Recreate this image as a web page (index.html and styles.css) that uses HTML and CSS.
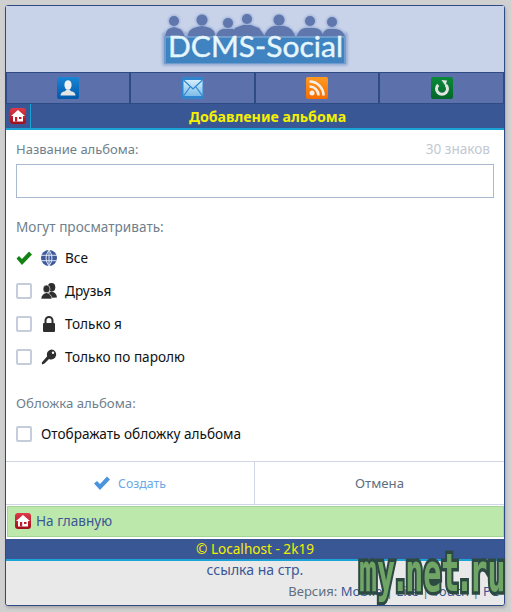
FILE: index.html
```html
<!DOCTYPE html>
<html lang="en">
<head>
  <meta charset="UTF-8">
  <title>DCMS-Social</title>
  <link rel="stylesheet" href="styles.css">
</head>
<body>
  <div class="page">
    <div class="logo-bar">
      <svg class="logo" width="190" height="54" viewBox="0 0 190 54">
        <defs>
          <filter id="soft" x="-10%" y="-10%" width="120%" height="120%"><feGaussianBlur stdDeviation="1.200"/></filter>
          <g id="people">
            <circle cx="14" cy="8" r="5"/><path d="M5 26 q0-10 6-11 l3-1 3 1 q7 1 8 11z"/>
            <circle cx="42" cy="7" r="5.500"/><path d="M27 26 q1-11 10-12 l5-1 5 1 q8 1 9 12z"/>
            <circle cx="68" cy="10" r="5"/><path d="M55 26 q2-9 8-10 h10 q7 1 9 10z"/>
            <circle cx="87" cy="6" r="5"/><path d="M72 26 l3-11 8-3 h8 l8 3 8 11z"/>
            <circle cx="119" cy="7" r="5.500"/><path d="M103 26 q4-12 11-13 h10 q9 1 12 13z"/>
            <circle cx="150" cy="8" r="5"/><path d="M136 26 q2-10 9-11 h10 q8 1 9 11z"/>
            <circle cx="172" cy="9" r="5"/><path d="M161 26 q2-9 7-10 h8 q8 1 10 10z"/>
          </g>
        </defs>
        <g class="logo-glow" filter="url(#soft)">
          <use href="#people"/>
          <rect x="3" y="20" width="184" height="32" rx="2"/>
        </g>
        <use class="logo-people" href="#people"/>
        <rect class="logo-edge" x="4" y="23" width="182" height="28" rx="1"/>
        <rect class="logo-base" x="6" y="25" width="178" height="25"/>
        <text class="logo-text" x="8" y="44" textLength="175" lengthAdjust="spacingAndGlyphs">DCMS-Social</text>
      </svg>
    </div>

    <div class="nav">
      <a class="nav-cell">
        <svg width="22" height="22" viewBox="0 0 22 22">
          <defs>
            <linearGradient id="g-blue" x1="0" y1="0" x2="0" y2="1"><stop offset="0" stop-color="#1a86d6"/><stop offset="1" stop-color="#0059ab"/></linearGradient>
            <linearGradient id="g-mail" x1="0" y1="0" x2="0" y2="1"><stop offset="0" stop-color="#d4eefb"/><stop offset="1" stop-color="#7dbce8"/></linearGradient>
            <linearGradient id="g-rss" x1="0" y1="0" x2="0" y2="1"><stop offset="0" stop-color="#ff9a22"/><stop offset="1" stop-color="#f56d00"/></linearGradient>
            <linearGradient id="g-green" x1="0" y1="0" x2="0" y2="1"><stop offset="0" stop-color="#0b8a3a"/><stop offset="1" stop-color="#03662a"/></linearGradient>
            <linearGradient id="g-red" x1="0" y1="0" x2="0" y2="1"><stop offset="0" stop-color="#e03a49"/><stop offset="1" stop-color="#a00d1b"/></linearGradient>
          </defs>
          <rect width="22" height="22" rx="2" fill="url(#g-blue)"/>
          <ellipse cx="11" cy="8" rx="3.600" ry="4.800" fill="#f2f2f2"/>
          <path d="M3.500 18.500 q0-3.500 4.500-4.300 l1.500-1.700 h3 l1.500 1.700 q4.500.8 4.500 4.300z" fill="#e4e4e4"/>
        </svg>
      </a>
      <a class="nav-cell">
        <svg width="22" height="22" viewBox="0 0 22 22">
          <rect width="22" height="22" rx="2" fill="#2f86cf"/>
          <rect x="1.500" y="3" width="19" height="16" fill="url(#g-mail)"/>
          <path d="M1.500 3 L11 12 L20.500 3 M1.500 19 L8 10 M20.500 19 L14 10" fill="none" stroke="#2f86cf" stroke-width="1.200"/>
        </svg>
      </a>
      <a class="nav-cell">
        <svg width="22" height="22" viewBox="0 0 22 22">
          <rect width="22" height="22" rx="2" fill="url(#g-rss)"/>
          <circle cx="6" cy="16" r="2.500" fill="#f4efe8"/>
          <path d="M3.500 9.500 a9 9 0 0 1 9 9 M3.500 4.500 a14 14 0 0 1 14 14" fill="none" stroke="#f4efe8" stroke-width="2.600"/>
        </svg>
      </a>
      <a class="nav-cell">
        <svg width="22" height="22" viewBox="0 0 22 22">
          <rect width="22" height="22" rx="2" fill="url(#g-green)"/>
          <path d="M7.200 7.800 a5.500 5.500 0 1 0 7.600 0" fill="none" stroke="#e4e4e4" stroke-width="3"/>
          <path d="M10.500 3 l5.500 .5 -1.500 5.500z" fill="#e4e4e4"/>
        </svg>
      </a>
    </div>

    <div class="title-bar">
      <a class="title-home">
        <svg width="16" height="16" viewBox="0 0 16 16">
          <rect width="16" height="16" rx="3" fill="url(#g-red)"/>
          <path d="M8 2 L15 8 H13 V13.500 H3 V8 H1 z" fill="#fff"/>
          <rect x="5" y="9" width="2.200" height="4.500" fill="#c01c2b"/>
          <rect x="9" y="9" width="2.500" height="2" fill="#c01c2b"/>
        </svg>
      </a>
      <div class="title-text">Добавление альбома</div>
    </div>

    <form class="form">
      <div class="label-row">
        <span class="label label-name">Название альбома:</span>
        <span class="counter">30 знаков</span>
      </div>
      <input class="text-input" type="text">

      <div class="label group-label">Могут просматривать:</div>
      <div class="option">
        <svg class="check" width="16" height="16" viewBox="0 0 16 16"><path d="M0.500 8.500 L3 6 L6 9 L13 1.500 L16 4.500 L6 15z" fill="#158215"/></svg>
        <svg class="opt-icon" width="16" height="16" viewBox="0 0 16 16">
          <circle cx="8" cy="8" r="8" fill="#3f5a9c"/>
          <path d="M0 5.300 H16 M0 10.700 H16 M8 0 V16 M8 0 Q2 8 8 16 M8 0 Q14 8 8 16" fill="none" stroke="#dfe5f2" stroke-width="1"/>
        </svg>
        <span>Все</span>
      </div>
      <div class="option">
        <span class="box"></span>
        <svg class="opt-icon" width="16" height="16" viewBox="0 0 16 16" fill="#2e2e2e">
          <ellipse cx="10.500" cy="4.300" rx="3.800" ry="4.300"/>
          <path d="M6 15 q-.5-5 4.500-6.500 q5 1 5.500 6z"/>
          <ellipse cx="5.500" cy="6" rx="3.500" ry="4" stroke="#fff" stroke-width=".6"/>
          <path d="M0 16 q0-5 5.500-6.500 q5 1.500 5.500 6.500z" stroke="#fff" stroke-width=".6"/>
        </svg>
        <span>Друзья</span>
      </div>
      <div class="option">
        <span class="box"></span>
        <svg class="opt-icon" width="16" height="16" viewBox="0 0 16 16">
          <path d="M4.500 8 V4.500 a3.500 3.500 0 0 1 7 0 V8" fill="none" stroke="#2e2e2e" stroke-width="2"/>
          <rect x="2" y="7" width="12" height="9" rx="1" fill="#2e2e2e"/>
        </svg>
        <span>Только я</span>
      </div>
      <div class="option">
        <span class="box"></span>
        <svg class="opt-icon" width="16" height="16" viewBox="0 0 16 16">
          <path d="M10.500 0.500 a5 5 0 1 1 -2.500 9.500 L3.500 14.500 L1 15.500 L0.800 13.500 L6.200 7.200 a5 5 0 0 1 4.300-6.700z" fill="#2e2e2e"/>
          <circle cx="12" cy="3.800" r="1.200" fill="#fff"/>
        </svg>
        <span>Только по паролю</span>
      </div>

      <div class="label cover-label">Обложка альбома:</div>
      <div class="option">
        <span class="box"></span>
        <span>Отображать обложку альбома</span>
      </div>
    </form>

    <div class="buttons">
      <a class="btn btn-ok">
        <svg width="16" height="16" viewBox="0 0 16 16"><path d="M0 8.500 L3 6 L6 9 L13 1.500 L16 4.500 L6 15z" fill="#4a93de"/></svg>
        Создать
      </a>
      <a class="btn btn-cancel">Отмена</a>
    </div>

    <a class="home-link">
      <svg width="16" height="16" viewBox="0 0 16 16">
        <rect width="16" height="16" rx="3" fill="url(#g-red)"/>
        <path d="M8 2 L15 8 H13 V13.500 H3 V8 H1 z" fill="#fff"/>
        <rect x="5" y="9" width="2.200" height="4.500" fill="#c01c2b"/>
        <rect x="9" y="9" width="2.500" height="2" fill="#c01c2b"/>
      </svg>
      На главную
    </a>

    <div class="copyright">© Localhost - 2k19</div>
    <div class="foot">
      <a class="foot-link">ссылка на стр.</a>
      <div class="versions">Версия: <a>Mobile</a> | <a>Lite</a> | <a>Touch</a> | <a>PC</a></div>
    </div>
  </div>

  <div class="watermark">my<span class="dot">.</span>net<span class="dot">.</span>ru</div>
</body>
</html>
```

FILE: styles.css
```css
* {
  box-sizing: border-box;
}

html, body {
  height: 100%;
  overflow: hidden;
}

body {
  margin: 0;
  padding: 5px 6px 0 5px;
  background: #d0d0d0;
  font-family: "Noto Sans", "Open Sans", sans-serif;
  font-size: 13.6px;
  color: #111;
}

svg {
  display: block;
  flex: none;
}

.page {
  width: 500px;
  background: #fff;
  border: 1px solid #2f4b85;
  border-radius: 3px;
  box-shadow: 1px 2px 3px #aaa;
}

/* logo */
.logo-bar {
  height: 66px;
  padding-top: 7px;
  background: #c8d3ea;
  display: flex;
  justify-content: center;
}

.logo-glow {
  fill: #9cb0d6;
  stroke: #9cb0d6;
  stroke-width: 2;
}

.logo-people {
  fill: #5f77ad;
}

.logo-edge {
  fill: #6f9ccd;
}

.logo-base {
  fill: #3f83c0;
}

.logo-text {
  font-family: "Lato", sans-serif;
  font-size: 28px;
  font-weight: 400;
  fill: #e6f6fd;
  stroke: #e6f6fd;
  stroke-width: 0.4;
}

/* nav */
.nav {
  display: grid;
  grid-template-columns: 124px 125px 124px 125px;
  background: #2f4b85;
}

.nav-cell {
  height: 32px;
  background: #5c71ab;
  border: 1px solid #2f4b85;
  display: flex;
  justify-content: center;
  align-items: center;
}

.title-bar {
  height: 26px;
  display: flex;
  background: #3a5795;
  border-bottom: 2px solid #1ba3d6;
  color: #f5f000;
}

.title-home {
  width: 25px;
  padding: 4px 0 0 4px;
  border-right: 1px solid #1ba3d6;
}

.title-text {
  flex: 1;
  text-align: center;
  font-size: 14.2px;
  font-weight: bold;
  line-height: 25px;
}

/* form */
.form {
  padding: 9px 10px 0;
  height: 331px;
}

.label-row {
  display: flex;
  justify-content: space-between;
  padding-right: 4px;
}

.label {
  color: #6f7f8c;
  line-height: 20px;
}

.label-name {
  font-size: 13px;
}

.counter {
  color: #c3c9d2;
  line-height: 20px;
}

.text-input {
  display: block;
  width: 478px;
  height: 34px;
  margin-top: 5px;
  border: 1px solid #a9b9d0;
  background: #fff;
}

.group-label {
  margin-top: 19px;
}

.option {
  height: 33px;
  display: flex;
  align-items: center;
  gap: 9px;
}

.group-label + .option {
  margin-top: 4px;
}

.box {
  width: 16px;
  height: 16px;
  border: 2px solid #c5cddb;
  border-radius: 2px;
  flex: none;
}

.opt-icon {
  margin-right: -1px;
}

.cover-label {
  margin-top: 20px;
  font-size: 13.2px;
}

.cover-label + .option {
  margin-top: 4px;
}

/* buttons */
.buttons {
  display: grid;
  grid-template-columns: 249px 1fr;
  height: 44px;
  border-top: 1px solid #ced6e4;
  border-bottom: 1px solid #ced6e4;
}

.btn {
  display: flex;
  justify-content: center;
  align-items: center;
  gap: 8px;
}

.btn-ok {
  color: #6aa9e8;
  font-size: 12.3px;
  border-right: 1px solid #ced6e4;
}

.btn-cancel {
  color: #5f6f80;
  font-size: 13.2px;
}

/* bottom */
.home-link {
  display: flex;
  align-items: center;
  gap: 5px;
  height: 31px;
  margin: 1px 0 1px 1px;
  padding: 0 0 2px 7px;
  background: #bde8ab;
  border: 1px solid #a5d596;
  color: #3a5795;
}

.copyright {
  height: 22px;
  margin-top: 2px;
  background: #3a5795;
  border-bottom: 2px solid #1ba3d6;
  color: #f5f000;
  text-align: center;
  line-height: 20px;
}

.foot {
  height: 44px;
  background: #e9e9e9;
  color: #5f6f80;
  border-radius: 0 0 3px 3px;
}

.foot-link {
  display: block;
  font-size: 14px;
  text-align: center;
  color: #3a5795;
  line-height: 17px;
}

.versions {
  margin-top: 3px;
  padding-right: 5px;
  font-size: 13px;
  text-align: right;
  line-height: 20px;
}

.versions a {
  color: #3a5795;
}

.watermark {
  position: absolute;
  left: 359px;
  top: 558px;
  font-family: "DejaVu Sans Mono", monospace;
  font-weight: bold;
  font-size: 30px;
  line-height: 30px;
  white-space: nowrap;
  color: #70a566;
  -webkit-text-stroke: 4px #2c4a42;
  paint-order: stroke fill;
  transform: scaleY(1.75);
  transform-origin: 0 50%;
}

.dot {
  margin: 0 -4px;
}
```
